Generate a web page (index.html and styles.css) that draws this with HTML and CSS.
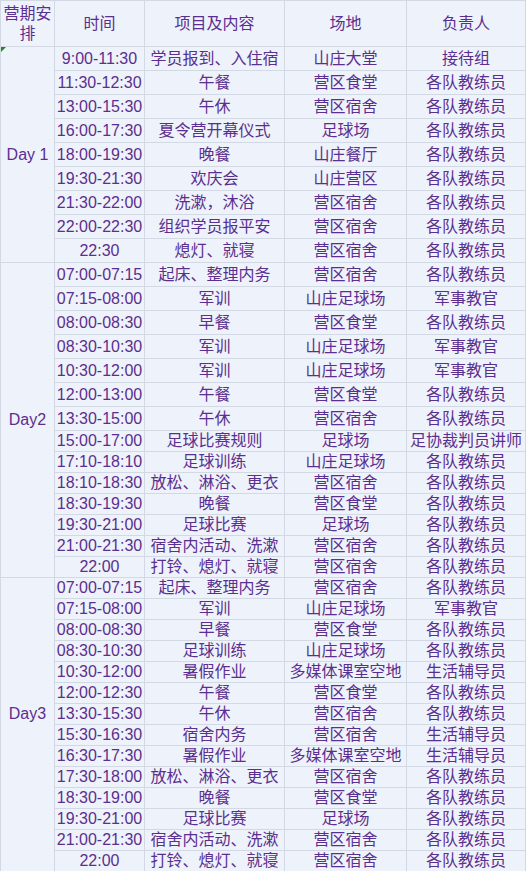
FILE: index.html
```html
<!DOCTYPE html>
<html lang="zh-CN">
<head>
<meta charset="utf-8">
<title>营期安排</title>
<link rel="stylesheet" href="styles.css">
</head>
<body>
<table class="sched">
  <colgroup>
    <col class="c-day"><col class="c-time"><col class="c-item"><col class="c-place"><col class="c-owner">
  </colgroup>
  <thead>
    <tr class="head">
      <th>营期安排</th><th>时间</th><th>项目及内容</th><th>场地</th><th>负责人</th>
    </tr>
  </thead>
  <tbody>
    <tr class="r24"><td class="day note" rowspan="9">Day 1</td><td>9:00-11:30</td><td>学员报到、入住宿</td><td>山庄大堂</td><td>接待组</td></tr>
    <tr class="r24"><td>11:30-12:30</td><td>午餐</td><td>营区食堂</td><td>各队教练员</td></tr>
    <tr class="r24"><td>13:00-15:30</td><td>午休</td><td>营区宿舍</td><td>各队教练员</td></tr>
    <tr class="r24"><td>16:00-17:30</td><td>夏令营开幕仪式</td><td>足球场</td><td>各队教练员</td></tr>
    <tr class="r24"><td>18:00-19:30</td><td>晚餐</td><td>山庄餐厅</td><td>各队教练员</td></tr>
    <tr class="r24"><td>19:30-21:30</td><td>欢庆会</td><td>山庄营区</td><td>各队教练员</td></tr>
    <tr class="r24"><td>21:30-22:00</td><td>洗漱，沐浴</td><td>营区宿舍</td><td>各队教练员</td></tr>
    <tr class="r24"><td>22:00-22:30</td><td>组织学员报平安</td><td>营区宿舍</td><td>各队教练员</td></tr>
    <tr class="r24"><td>22:30</td><td>熄灯、就寝</td><td>营区宿舍</td><td>各队教练员</td></tr>

    <tr class="r24"><td class="day" rowspan="14">Day2</td><td>07:00-07:15</td><td>起床、整理内务</td><td>营区宿舍</td><td>各队教练员</td></tr>
    <tr class="r24"><td>07:15-08:00</td><td>军训</td><td>山庄足球场</td><td>军事教官</td></tr>
    <tr class="r24"><td>08:00-08:30</td><td>早餐</td><td>营区食堂</td><td>各队教练员</td></tr>
    <tr class="r24"><td>08:30-10:30</td><td>军训</td><td>山庄足球场</td><td>军事教官</td></tr>
    <tr class="r24"><td>10:30-12:00</td><td>军训</td><td>山庄足球场</td><td>军事教官</td></tr>
    <tr class="r24"><td>12:00-13:00</td><td>午餐</td><td>营区食堂</td><td>各队教练员</td></tr>
    <tr class="r24"><td>13:30-15:00</td><td>午休</td><td>营区宿舍</td><td>各队教练员</td></tr>
    <tr class="r21"><td>15:00-17:00</td><td>足球比赛规则</td><td>足球场</td><td>足协裁判员讲师</td></tr>
    <tr class="r20"><td>17:10-18:10</td><td>足球训练</td><td>山庄足球场</td><td>各队教练员</td></tr>
    <tr class="r21"><td>18:10-18:30</td><td>放松、淋浴、更衣</td><td>营区宿舍</td><td>各队教练员</td></tr>
    <tr class="r21"><td>18:30-19:30</td><td>晚餐</td><td>营区食堂</td><td>各队教练员</td></tr>
    <tr class="r20"><td>19:30-21:00</td><td>足球比赛</td><td>足球场</td><td>各队教练员</td></tr>
    <tr class="r21"><td>21:00-21:30</td><td>宿舍内活动、洗漱</td><td>营区宿舍</td><td>各队教练员</td></tr>
    <tr class="r21"><td>22:00</td><td>打铃、熄灯、就寝</td><td>营区宿舍</td><td>各队教练员</td></tr>

    <tr class="r21"><td class="day day-raised" rowspan="14">Day3</td><td>07:00-07:15</td><td>起床、整理内务</td><td>营区宿舍</td><td>各队教练员</td></tr>
    <tr class="r21"><td>07:15-08:00</td><td>军训</td><td>山庄足球场</td><td>军事教官</td></tr>
    <tr class="r21"><td>08:00-08:30</td><td>早餐</td><td>营区食堂</td><td>各队教练员</td></tr>
    <tr class="r21"><td>08:30-10:30</td><td>足球训练</td><td>山庄足球场</td><td>各队教练员</td></tr>
    <tr class="r21"><td>10:30-12:00</td><td>暑假作业</td><td>多媒体课室空地</td><td>生活辅导员</td></tr>
    <tr class="r21"><td>12:00-12:30</td><td>午餐</td><td>营区食堂</td><td>各队教练员</td></tr>
    <tr class="r21"><td>13:30-15:30</td><td>午休</td><td>营区宿舍</td><td>各队教练员</td></tr>
    <tr class="r21"><td>15:30-16:30</td><td>宿舍内务</td><td>营区宿舍</td><td>生活辅导员</td></tr>
    <tr class="r21"><td>16:30-17:30</td><td>暑假作业</td><td>多媒体课室空地</td><td>生活辅导员</td></tr>
    <tr class="r21"><td>17:30-18:00</td><td>放松、淋浴、更衣</td><td>营区宿舍</td><td>各队教练员</td></tr>
    <tr class="r21"><td>18:30-19:00</td><td>晚餐</td><td>营区食堂</td><td>各队教练员</td></tr>
    <tr class="r21"><td>19:30-21:00</td><td>足球比赛</td><td>足球场</td><td>各队教练员</td></tr>
    <tr class="r21"><td>21:00-21:30</td><td>宿舍内活动、洗漱</td><td>营区宿舍</td><td>各队教练员</td></tr>
    <tr class="r21"><td>22:00</td><td>打铃、熄灯、就寝</td><td>营区宿舍</td><td>各队教练员</td></tr>
  </tbody>
</table>
</body>
</html>
```

FILE: styles.css
```css
html, body {
  margin: 0;
  padding: 0;
  background: #eef2fa;
}

.sched {
  border-collapse: collapse;
  table-layout: fixed;
  width: 525px;
  font-family: "Liberation Sans", "Noto Sans CJK SC", sans-serif;
  font-size: 16px;
  color: #5b2f8f;
  background: #eef2fa;
}

.c-day { width: 54px; }
.c-time { width: 90px; }
.c-item { width: 140px; }
.c-place { width: 122px; }
.c-owner { width: 119px; }

.sched th,
.sched td {
  border: 1px solid #d3d9e4;
  padding: 0 1px;
  text-align: center;
  vertical-align: middle;
  font-weight: normal;
  line-height: 20px;
}

.sched td {
  white-space: nowrap;
  overflow: hidden;
}

.head { height: 46px; }
.r24 { height: 24px; }
.r21 { height: 21px; }
.r20 { height: 20px; }

.sched td.day-raised {
  padding-bottom: 22px;
}

.note {
  position: relative;
}

.note::before {
  content: "";
  position: absolute;
  left: 0;
  top: 0;
  width: 0;
  height: 0;
  border-top: 5px solid #1f8a1f;
  border-right: 5px solid transparent;
}
```
